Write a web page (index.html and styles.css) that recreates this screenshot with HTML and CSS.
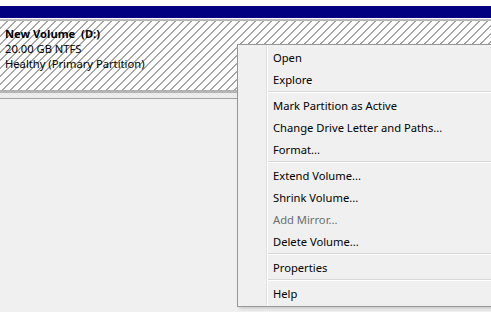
FILE: index.html
```html
<!DOCTYPE html>
<html lang="en">
<head>
    <meta charset="UTF-8">
    <title>Disk Management</title>
    <link rel="stylesheet" href="styles.css">
</head>
<body>
    <div class="disk">
        <div class="disk-bar"></div>
        <div class="volume">
            <div class="volume-name">New Volume&nbsp; (D:)</div>
            <div>20.00 GB NTFS</div>
            <div>Healthy (Primary Partition)</div>
        </div>
        <div class="disk-foot"></div>
    </div>

    <ul class="menu">
        <li class="item">Open</li>
        <li class="item">Explore</li>
        <li class="sep"></li>
        <li class="item">Mark Partition as Active</li>
        <li class="item">Change Drive Letter and Paths...</li>
        <li class="item">Format...</li>
        <li class="sep"></li>
        <li class="item">Extend Volume...</li>
        <li class="item">Shrink Volume...</li>
        <li class="item disabled">Add Mirror...</li>
        <li class="item">Delete Volume...</li>
        <li class="sep"></li>
        <li class="item">Properties</li>
        <li class="sep"></li>
        <li class="item">Help</li>
    </ul>
</body>
</html>
```

FILE: styles.css
```css
body {
    margin: 0;
    background-color: #f0f0f0;
    font-family: "Noto Sans", sans-serif;
    font-size: 11.2px;
    color: #000;
}

/* Zone du disque */
.disk {
    background-color: #ffffff;
    padding-top: 6px;
}

.disk-bar {
    height: 12px;
    background-color: #000080;
    border-bottom: 1px solid #ffffff;
}

.volume {
    height: 64px;
    padding: 5px 5px 0;
    border-top: 2px solid #b9b9b9;
    border-bottom: 3px solid #b4b4b4;
    background-color: #ffffff;
    background-image: repeating-linear-gradient(135deg, #ffffff 0 4.6px, #a8a8a8 4.6px 5.66px);
    line-height: 15px;
}

.volume-name {
    font-weight: bold;
}

.disk-foot {
    height: 5px;
    background-color: #ececec;
    border-bottom: 1px solid #a0a0a0;
}

/* Menu contextuel */
.menu {
    position: absolute;
    top: 44px;
    left: 237px;
    width: 270px;
    margin: 0;
    padding: 2px 2px 1px;
    list-style: none;
    background-color: #f0f0f0;
    border: 1px solid #979797;
    box-shadow: 2px 2px 3px rgba(0, 0, 0, 0.15);
    background-image: linear-gradient(to right, transparent 28px, #e2e2e2 28px, #e2e2e2 29px, #ffffff 29px, #ffffff 30px, transparent 30px);
}

.item {
    height: 22px;
    line-height: 22px;
    padding-left: 33px;
    white-space: nowrap;
}

.item.disabled {
    color: #6d6d6d;
}

.sep {
    height: 1px;
    margin: 0 0 2px 28px;
    background-color: #d7d7d7;
    border-bottom: 1px solid #ffffff;
}
```
